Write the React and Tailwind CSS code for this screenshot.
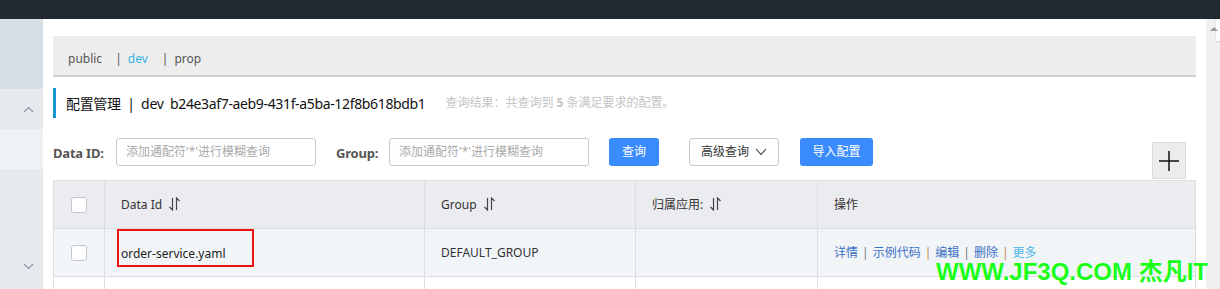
import React from 'react';

function SortIcon() {
  return (
    <svg width="11" height="14" viewBox="0 0 11 14" className="inline-block ml-[7px] -mt-[2px]">
      <path d="M3.5 1 V13 L0.5 10" fill="none" stroke="#444" strokeWidth="1.2" />
      <path d="M7.5 13 V1 L10.5 4" fill="none" stroke="#444" strokeWidth="1.2" />
    </svg>
  );
}

function Chevron({ up, className }) {
  return (
    <svg width="11" height="7" viewBox="0 0 11 7" className={className}>
      <path d={up ? 'M1 6 L5.5 1.5 L10 6' : 'M1 1 L5.5 5.5 L10 1'} fill="none" stroke="#8a96a3" strokeWidth="1.1" />
    </svg>
  );
}

function Checkbox() {
  return <div className="w-[16px] h-[16px] rounded-[3px] border border-[#c4c6cf] bg-white mx-auto" />;
}

function Sidebar() {
  return (
    <div className="w-[43px] shrink-0 flex flex-col">
      <div className="h-[70px] bg-[#d7dee4]" />
      <div className="h-[40px] bg-[#e6eaee] flex items-center justify-end pr-[9px]">
        <Chevron up />
      </div>
      <div className="h-[40px] bg-[#eff2f5]" />
      <div className="flex-1 bg-[#e6eaee] flex items-end justify-end pr-[9px] pb-[19px]">
        <Chevron />
      </div>
    </div>
  );
}

function Toolbar() {
  return (
    <div className="flex items-start h-[42px]">
      <span className="w-[63px] shrink-0 text-[13px] font-bold text-[#555] mt-[6px] tracking-[-0.2px]">Data ID:</span>
      <div className="w-[200px] h-[28px] border border-[#c8c8c8] rounded-[3px] flex items-center pl-[9px] text-[12px] text-[#aaa]">
        添加通配符'*'进行模糊查询
      </div>
      <span className="ml-[20px] w-[53px] shrink-0 text-[13px] font-bold text-[#555] mt-[6px] tracking-[-0.2px]">Group:</span>
      <div className="w-[200px] h-[28px] border border-[#c8c8c8] rounded-[3px] flex items-center pl-[9px] text-[12px] text-[#aaa]">
        添加通配符'*'进行模糊查询
      </div>
      <button className="ml-[20px] w-[50px] h-[28px] rounded-[3px] bg-[#3a8bfb] text-white text-[12px]">查询</button>
      <button className="ml-[30px] w-[90px] h-[28px] rounded-[3px] border border-[#c8c8c8] bg-white text-[#333] text-[12px] flex items-center justify-center gap-[6px]">
        高级查询
        <svg width="12" height="8" viewBox="0 0 12 8"><path d="M1 1 L6 6.5 L11 1" fill="none" stroke="#333" strokeWidth="1.1" /></svg>
      </button>
      <button className="ml-[21px] w-[73px] h-[28px] rounded-[3px] bg-[#3a8bfb] text-white text-[12px]">导入配置</button>
      <div className="ml-auto mr-[10px] mt-[4px] w-[34px] h-[37px] bg-[#ececec] border border-[#dcdcdc] flex items-center justify-center">
        <svg width="20" height="20" viewBox="0 0 20 20">
          <path d="M10 0 V20 M0 10 H20" stroke="#111" strokeWidth="1.5" />
        </svg>
      </div>
    </div>
  );
}

function ConfigTable() {
  const th = 'border border-[#dcdee3] text-left font-normal pl-4 text-[12px] text-[#333]';
  const td = 'border border-[#dcdee3] pl-4 text-[12px] text-[#333]';
  return (
    <table className="w-[1143px] border-collapse table-fixed">
      <colgroup>
        <col className="w-[51px]" />
        <col className="w-[320px]" />
        <col className="w-[211px]" />
        <col className="w-[182px]" />
        <col />
      </colgroup>
      <thead>
        <tr className="h-[48px] bg-[#ebecf0]">
          <th className="border border-[#dcdee3]"><Checkbox /></th>
          <th className={th}>Data Id<SortIcon /></th>
          <th className={th}>Group<SortIcon /></th>
          <th className={th}>归属应用:<SortIcon /></th>
          <th className={th}>操作</th>
        </tr>
      </thead>
      <tbody>
        <tr className="h-[48px] bg-[#f2f5f8]">
          <td className="border border-[#dcdee3]"><Checkbox /></td>
          <td className="border border-[#dcdee3] pl-[12px]">
            <div className="w-[137px] h-[38px] border-2 border-[#ee1111] -mt-[10px] flex items-end pb-[2px] pl-[2px] text-[12px] text-[#222]">
              order-service.yaml
            </div>
          </td>
          <td className={td}>DEFAULT_GROUP</td>
          <td className={td}></td>
          <td className="border border-[#dcdee3] pl-4 text-[12px] text-[#3a6fc4]">
            <span>详情</span>
            <span className="mx-[4px] text-[#777]">|</span>
            <span>示例代码</span>
            <span className="mx-[4px] text-[#b8864a]">|</span>
            <span>编辑</span>
            <span className="mx-[4px] text-[#777]">|</span>
            <span>删除</span>
            <span className="mx-[4px] text-[#b8864a]">|</span>
            <span className="text-[#4ab3e4]">更多</span>
          </td>
        </tr>
        <tr className="h-[48px] bg-white">
          <td className="border border-[#dcdee3]" />
          <td className="border border-[#dcdee3]" />
          <td className="border border-[#dcdee3]" />
          <td className="border border-[#dcdee3]" />
          <td className="border border-[#dcdee3]" />
        </tr>
      </tbody>
    </table>
  );
}

export default function App() {
  return (
    <div className="relative w-[1220px] h-[289px] overflow-hidden bg-white font-['Noto_Sans','Noto_Sans_CJK_SC',sans-serif]">
      <div className="h-[19px] bg-[#222931]" />
      <div className="flex h-[270px]">
        <Sidebar />
        <div className="flex-1 pl-[10px] pr-[10px]">
          <div className="mt-[17px] h-[41px] bg-[#ededed] border-b-2 border-[#d0d0d0] flex items-center pt-[6px] pl-[15px] text-[12px] text-[#555]">
            <span>public</span>
            <span className="ml-[13px]">|</span>
            <span className="ml-[6px] text-[#36b3e0]">dev</span>
            <span className="ml-[14px]">|</span>
            <span className="ml-[6px]">prop</span>
          </div>
          <div className="mt-[11px] h-[30px] border-l-[3px] border-[#1797d0] flex items-center pl-[10px]">
            <span className="text-[14px] text-[#111] tracking-[-0.35px]">配置管理 &nbsp;|&nbsp; dev &nbsp;b24e3af7-aeb9-431f-a5ba-12f8b618bdb1</span>
            <span className="ml-[20px] text-[12px] text-[#c4c4c4]">查询结果：共查询到 <b className="font-bold">5</b> 条满足要求的配置。</span>
          </div>
          <div className="mt-[20px]">
            <Toolbar />
          </div>
          <ConfigTable />
        </div>
        <div className="w-[14px] shrink-0 bg-[#f0f0f0] relative">
          <div className="absolute left-[10px] top-0 w-[6px] h-[22px] bg-white shadow-[0_1px_2px_rgba(0,0,0,0.15)]" />
          <div className="absolute left-[4px] top-[8px] w-0 h-0 border-l-[4px] border-r-[4px] border-b-[4px] border-l-transparent border-r-transparent border-b-[#999]" />
        </div>
      </div>
      <div className="absolute left-[936px] top-[260px] text-[24px] font-bold text-[#1bff1b] leading-[24px] whitespace-nowrap font-['Liberation_Sans','Noto_Sans_CJK_SC',sans-serif]">
        WWW.JF3Q.COM 杰凡IT
      </div>
    </div>
  );
}
